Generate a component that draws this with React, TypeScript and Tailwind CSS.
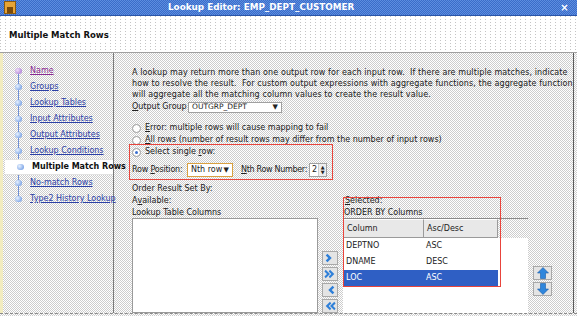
import React from "react";

const checker =
  "bg-[image:repeating-conic-gradient(#cdcdcd_0_25%,#ffffff_0_50%)] bg-[length:2px_2px]";
const dots =
  "bg-[image:conic-gradient(at_1px_1px,#ffffff_75%,#c4c4c4_0)] bg-[length:5px_3px]";

function Chevron({ dir, double }: { dir: "r" | "l"; double?: boolean }) {
  const single = dir === "r" ? "4,2 9,7 4,12 2,10 5,7 2,4" : "10,2 5,7 10,12 12,10 9,7 12,4";
  return (
    <svg width="14" height="12" viewBox="0 0 14 14">
      {double ? (
        dir === "r" ? (
          <>
            <polygon points="2,2 7,7 2,12 0.5,10 3.5,7 0.5,4" fill="#2f7fd8" />
            <polygon points="7,2 12,7 7,12 5.5,10 8.5,7 5.5,4" fill="#2f7fd8" />
          </>
        ) : (
          <>
            <polygon points="7,2 2,7 7,12 8.5,10 5.5,7 8.5,4" fill="#2f7fd8" />
            <polygon points="12,2 7,7 12,12 13.5,10 10.5,7 13.5,4" fill="#2f7fd8" />
          </>
        )
      ) : (
        <polygon points={single} fill="#2f7fd8" />
      )}
    </svg>
  );
}

function SmallBtn({ children, w }: { children: React.ReactNode; w: string }) {
  return (
    <div
      className={`${w} h-[14px] border border-[#a8a8a8] bg-[#e4e4e4] flex items-center justify-center`}
    >
      {children}
    </div>
  );
}

function UpDown({ up }: { up?: boolean }) {
  return (
    <svg width="12" height="12" viewBox="0 0 12 12">
      {up ? (
        <polygon points="6,0.5 11.5,6 8.5,6 8.5,11.5 3.5,11.5 3.5,6 0.5,6" fill="#2f86dc" stroke="#1a5ca8" strokeWidth="0.6" />
      ) : (
        <polygon points="6,11.5 11.5,6 8.5,6 8.5,0.5 3.5,0.5 3.5,6 0.5,6" fill="#2f86dc" stroke="#1a5ca8" strokeWidth="0.6" />
      )}
    </svg>
  );
}

function Radio({ checked }: { checked?: boolean }) {
  return (
    <div className="w-[9px] h-[9px] rounded-full border border-[#9a9a9a] bg-white flex items-center justify-center shrink-0">
      {checked && <div className="w-[3px] h-[3px] rounded-full bg-[#3a6fd0]" />}
    </div>
  );
}

const navItems = [
  "Name",
  "Groups",
  "Lookup Tables",
  "Input Attributes",
  "Output Attributes",
  "Lookup Conditions",
  "Multiple Match Rows",
  "No-match Rows",
  "Type2 History Lookup",
];

export default function App() {
  return (
    <div className="w-[577px] h-[316px] overflow-hidden flex flex-col font-['DejaVu_Sans',sans-serif] text-[8px] text-[#222] bg-white">
      {/* title bar */}
      <div className="h-[16px] shrink-0 flex items-center bg-[image:repeating-conic-gradient(#3a6cc8_0_25%,#5d8de0_0_50%)] bg-[length:2px_2px] border-b border-[#2a55a8]">
        <div className="ml-[4px] w-[12px] h-[13px] bg-[#e7a436] border border-[#8a5a10] flex items-end justify-center">
          <div className="w-[6px] h-[6px] bg-[#7a4a0a]" />
        </div>
        <div className="ml-[152px] text-white font-bold text-[8.8px]">
          Lookup Editor: EMP_DEPT_CUSTOMER
        </div>
        <div className="ml-auto mr-[7px] w-[11px] h-[11px] flex items-center justify-center text-white font-bold text-[10px] leading-none">
          ×
        </div>
      </div>

      {/* header */}
      <div className={`h-[37px] shrink-0 flex items-center pl-[9px] pt-[2px] border-b border-[#a0a0a0] ${dots}`}>
        <span className="font-bold text-[8.5px] text-[#111] bg-white">Multiple Match Rows</span>
      </div>

      {/* body */}
      <div className={`flex-1 flex min-h-0 ${checker}`}>
        {/* nav */}
        <div className="w-[114px] shrink-0 border-r border-[#7a7a7a] relative pt-[10px] border-l-[3px] border-l-[#f2ecc0]">
          <div className="absolute left-[15px] top-[18px] h-[128px] w-[1px] bg-[#6f8fd6]" />
          {navItems.map((t, i) => {
            const sel = i === 6;
            return (
              <div
                key={t}
                className={`relative h-[16px] flex items-center pl-[12px] ${
                  sel ? "bg-white border-y border-[#e2e2e2] ml-[2px] pl-[10px]" : ""
                }`}
              >
                <div
                  className={`w-[7px] h-[6px] rounded-full shrink-0 ${
                    i === 0
                      ? "bg-[radial-gradient(circle_at_35%_35%,#f0e0f8,#a06ad0)]"
                      : "bg-[radial-gradient(circle_at_35%_35%,#e8f2ff,#5f8fe0)]"
                  }`}
                />
                <span
                  className={`ml-[8px] whitespace-nowrap ${
                    sel
                      ? "font-bold text-[#111]"
                      : i === 0
                      ? "underline text-[#8a2a92]"
                      : "underline text-[#2c40a6]"
                  }`}
                >
                  {t}
                </span>
              </div>
            );
          })}
        </div>

        {/* main */}
        <div className="w-[460px] shrink-0 border-r border-[#5a5a5a] relative pl-[18px] pt-[14px] flex flex-col">
          <p className="leading-[11px] whitespace-nowrap tracking-[0.1px]">
            A lookup may return more than one output row for each input row.&nbsp; If there are multiple matches, indicate
            <br />
            how to resolve the result.&nbsp; For custom output expressions with aggregate functions, the aggregate function
            <br />
            will aggregate all the matching column values to create the result value.
          </p>

          <div className="mt-[1px] h-[12px] flex items-center">
            <span className="w-[56px]">
              <span className="underline">O</span>utput Group
            </span>
            <div className="w-[94px] h-[11px] bg-white border border-[#a0a0a0] flex items-center pl-[3px] pr-[3px]">
              <span className="text-[7.5px]">OUTGRP_DEPT</span>
              <span className="ml-auto text-[7px]">▼</span>
            </div>
          </div>

          <div className="mt-[9px] h-[12px] flex items-center gap-[4px]">
            <Radio />
            <span>
              <span className="underline">E</span>rror: multiple rows will cause mapping to fail
            </span>
          </div>
          <div className="h-[12px] flex items-center gap-[4px]">
            <Radio />
            <span>
              <span className="underline">A</span>ll rows (number of result rows may differ from the number of input rows)
            </span>
          </div>
          <div className="h-[12px] flex items-center gap-[4px]">
            <Radio checked />
            <span>
              Select single <span className="underline">r</span>ow:
            </span>
          </div>

          <div className="mt-[5px] h-[14px] flex items-center">
            <span className="w-[55px] tracking-[-0.2px]">
              Row <span className="underline">P</span>osition:
            </span>
            <div className="w-[46px] h-[14px] bg-white border border-[#d9a040] flex items-center pl-[3px] pr-[3px]">
              <span>Nth row</span>
              <span className="ml-auto text-[7px]">▼</span>
            </div>
            <span className="ml-[8px] tracking-[-0.3px]">
              <span className="underline">N</span>th Row Number:
            </span>
            <div className="ml-[2px] w-[18px] h-[14px] bg-white border border-[#a0a0a0] flex items-center">
              <span className="pl-[2px]">2</span>
              <div className="ml-auto w-[8px] h-full flex flex-col items-center justify-center text-[5px] leading-[5px] bg-[#eee] border-l border-[#ccc]">
                <span>▲</span>
                <span>▼</span>
              </div>
            </div>
          </div>

          <div className="mt-[6px] h-[12px] flex items-center">Order Result Set By:</div>

          <div className="flex-1 flex min-h-0">
            {/* available */}
            <div className="w-[186px] shrink-0 flex flex-col">
              <div className="h-[12px] flex items-center">
                A<span className="underline">v</span>ailable:
              </div>
              <div className="h-[11px] flex items-center">Lookup Table Columns</div>
              <div className="flex-1 bg-white border border-[#9a9a9a]" />
            </div>

            {/* shuttle buttons */}
            <div className="ml-[4px] w-[16px] pt-[56px] flex flex-col gap-[2px]">
              <SmallBtn w="w-[16px]">
                <Chevron dir="r" />
              </SmallBtn>
              <SmallBtn w="w-[16px]">
                <Chevron dir="r" double />
              </SmallBtn>
              <SmallBtn w="w-[16px]">
                <Chevron dir="l" />
              </SmallBtn>
              <SmallBtn w="w-[16px]">
                <Chevron dir="l" double />
              </SmallBtn>
            </div>

            {/* selected */}
            <div className="ml-[5px] w-[185px] shrink-0 flex flex-col">
              <div className="h-[12px] flex items-center pl-[2px]">
                <span className="underline">S</span>elected:
              </div>
              <div className="h-[11px] flex items-center pl-[1px]">ORDER BY Columns</div>
              <div className="flex-1 border-t border-[#8a8a8a] flex flex-col">
                <div className="h-[19px] flex">
                  <div className="w-[155px] flex bg-[#e8e8e8] border-l border-b border-[#9a9a9a]">
                    <div className="w-[80px] border-r border-[#9a9a9a] flex items-center pl-[3px] border-t border-t-white">
                      Column
                    </div>
                    <div className="w-[74px] border-r border-[#9a9a9a] flex items-center pl-[3px] border-t border-t-white">
                      Asc/Desc
                    </div>
                  </div>
                </div>
                <div className="flex-1 bg-white flex flex-col">
                  {[
                    ["DEPTNO", "ASC"],
                    ["DNAME", "DESC"],
                    ["LOC", "ASC"],
                  ].map(([c, a], i) => (
                    <div
                      key={c}
                      className={`h-[16px] w-[155px] flex items-center ${
                        i === 2 ? "bg-[#2f5fc4] text-white" : ""
                      }`}
                    >
                      <span className="w-[80px] pl-[3px]">{c}</span>
                      <span className="pl-[3px]">{a}</span>
                    </div>
                  ))}
                </div>
              </div>
            </div>

            {/* up/down */}
            <div className="ml-[5px] w-[19px] pt-[71px] flex flex-col gap-[2px]">
              <SmallBtn w="w-[19px]">
                <UpDown up />
              </SmallBtn>
              <SmallBtn w="w-[19px]">
                <UpDown />
              </SmallBtn>
            </div>
          </div>

          {/* annotation boxes */}
          <div className="absolute left-[15px] top-[91px] w-[204px] h-[36px] border border-[#e8443c] pointer-events-none" />
          <div className="absolute left-[229px] top-[144px] w-[158px] h-[90px] border border-[#e8443c] pointer-events-none" />
        </div>
      </div>

      {/* bottom strip */}
      <div className={`h-[3px] shrink-0 border-t border-dashed border-[#8a8a8a] ${checker}`} />
    </div>
  );
}
